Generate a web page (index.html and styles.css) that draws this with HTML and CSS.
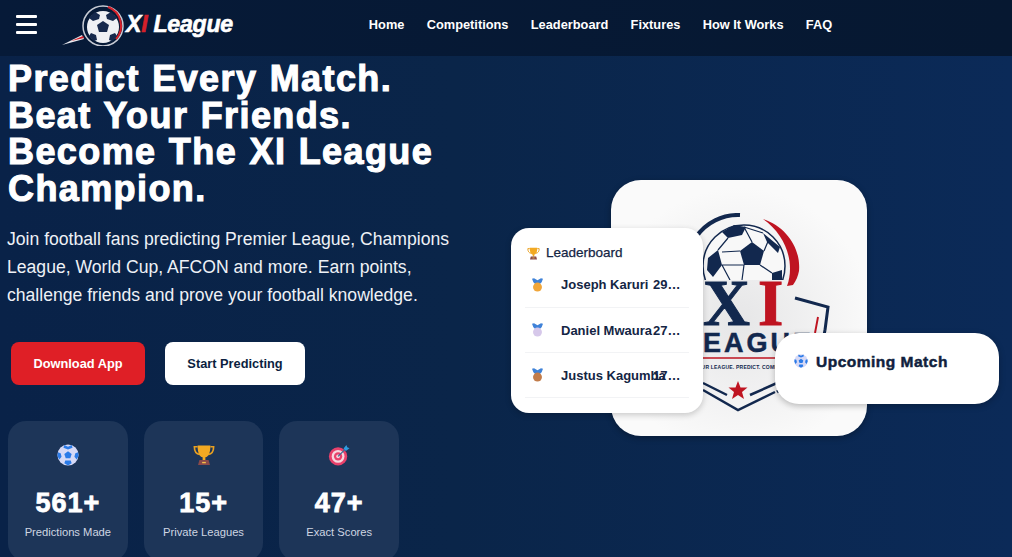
FILE: index.html
```html
<!DOCTYPE html>
<html lang="en">
<head>
    <meta charset="UTF-8">
    <meta name="viewport" content="width=device-width, initial-scale=1.0">
    <title>XI League</title>
    <link rel="stylesheet" href="styles.css">
</head>
<body>
    <svg class="icon-defs" width="0" height="0">
        <defs>
            <symbol id="ball" viewBox="0 0 24 24">
                <circle cx="12" cy="12" r="11.500" fill="#d6d9f6"/>
                <path d="M12 8l4 3-1.500 4.500h-5L8 11z" fill="#2b7be8"/>
                <path d="M8 1l4 2 4-2 1 3-5 2-5-2zM1 9l3 1 1 4-2.500 3L.5 13zM23 9l-3 1-1 4 2.500 3 2-4zM8 21l1-3h6l1 3-4 2.500z" fill="#2b7be8"/>
            </symbol>
            <symbol id="trophy" viewBox="0 0 24 24">
                <path d="M5 3H1.500c0 5 2 8 6 8.500M19 3h3.500c0 5-2 8-6 8.500" fill="none" stroke="#e9a020" stroke-width="1.800"/>
                <path d="M5 1.500h14c0 8-2 12-5.500 13v3h-3v-3C7 13.500 5 9.500 5 1.500z" fill="#f2a922"/>
                <path d="M7 17.500h10l1.500 5.500h-13z" fill="#8a4a4a"/>
                <rect x="10" y="19.500" width="4" height="1.500" fill="#f2c14a"/>
            </symbol>
            <symbol id="target" viewBox="0 0 24 24">
                <circle cx="11" cy="13.500" r="10" fill="#e8416b"/>
                <circle cx="11" cy="13.500" r="7" fill="#f7d7df"/>
                <circle cx="11" cy="13.500" r="4.500" fill="#e8416b"/>
                <circle cx="11" cy="13.500" r="2" fill="#f7d7df"/>
                <path d="M11 13.500l9-9" stroke="#3b6e96" stroke-width="1.500"/>
                <path d="M17 5l3-4 1 2.500 2.500 1-4 3z" fill="#2f9be0"/>
            </symbol>
            <symbol id="medal" viewBox="0 0 16 20">
                <path d="M0 1l3-1 5 3 5-3 3 1-2 5-3 3H5L2 6z" fill="#3f82d8"/>
                <circle cx="8" cy="13" r="6.500"/>
            </symbol>
        </defs>
    </svg>

    <div class="page">
        <nav class="navbar">
            <button class="menu-btn" aria-label="Menu"><span></span><span></span><span></span></button>
            <a class="brand" href="#">
                <svg class="brand-ball" viewBox="0 -2 64 44" width="64" height="44">
                    <path d="M1 41l20-10 2 4z" fill="#e8e9ee"/>
                    <path d="M10 37l12-5 1 2z" fill="#d5202a"/>
                    <circle cx="42" cy="22" r="20" fill="none" stroke="#c7cbd4" stroke-width="1.500"/>
                    <path d="M47 3a20 20 0 0 1 8 32" fill="none" stroke="#d5202a" stroke-width="2"/>
                    <circle cx="42" cy="23" r="16" fill="#eef0f4"/>
                    <path d="M42 17l6 4-2 7h-8l-2-7z" fill="#16294d"/>
                    <path d="M34 8l5 3-1 4-6 2-4-3zM50 8l-5 3 1 4 6 2 4-3zM30 29l5 2 1 5-3 1-5-5zM54 29l-5 2-1 5 3 1 5-5z" fill="#16294d"/>
                </svg>
                <span class="brand-name"><b>X</b><b class="brand-red">I</b> League</span>
            </a>
            <ul class="nav-links">
                <li>Home</li>
                <li>Competitions</li>
                <li>Leaderboard</li>
                <li>Fixtures</li>
                <li>How It Works</li>
                <li>FAQ</li>
            </ul>
        </nav>

        <main class="hero">
            <section class="hero-copy">
                <h1>Predict Every Match.<br>Beat Your Friends.<br>Become The XI League<br>Champion.</h1>
                <p class="lead">Join football fans predicting Premier League, Champions League, World Cup, AFCON and more. Earn points, challenge friends and prove your football knowledge.</p>
                <div class="hero-actions">
                    <a class="btn btn-red" href="#">Download App</a>
                    <a class="btn btn-white" href="#">Start Predicting</a>
                </div>
                <div class="stats">
                    <div class="stat">
                        <svg class="stat-icon"><use href="#ball"/></svg>
                        <strong>561+</strong>
                        <span>Predictions Made</span>
                    </div>
                    <div class="stat">
                        <svg class="stat-icon"><use href="#trophy"/></svg>
                        <strong>15+</strong>
                        <span>Private Leagues</span>
                    </div>
                    <div class="stat">
                        <svg class="stat-icon"><use href="#target"/></svg>
                        <strong>47+</strong>
                        <span>Exact Scores</span>
                    </div>
                </div>
            </section>

            <section class="hero-visual">
                <div class="logo-card">
                    <div class="crest">
                        <svg class="crest-art" viewBox="0 0 160 210" width="160" height="210">
                            <defs>
                                <clipPath id="ball-clip"><rect x="0" y="0" width="160" height="67"/></clipPath>
                            </defs>
                            <path d="M26 24A51 51 0 0 1 70 2" fill="none" stroke="#12284e" stroke-width="4"/>
                            <path d="M93 6c24 8 38 30 36 52-1 5-3 10-6 14l-6 1c8-22 0-50-24-67z" fill="#bf1421"/>
                            <g clip-path="url(#ball-clip)">
                                <circle cx="74" cy="53" r="41" fill="#f8f8f8" stroke="#12284e" stroke-width="1.500"/>
                                <path d="M82 29l12 9-4 14H74l-4-14z" fill="#12284e"/>
                                <path d="M52 19l12-7 12 2-4 8-14 3zM93 20l17 14-2 6-11-11zM48 37l4 15-9 12-6-7 1-12zM102 60l10-3v10h-10z" fill="#12284e"/>
                                <path d="M82 29l-8-15M94 38l5-12M90 52l12 8M74 52l-2 15M70 38l-18 1M58 25l-10 12M52 52l22 0M52 52l8 15M74 14l19 6" stroke="#12284e" stroke-width="1.200" fill="none"/>
                            </g>
                            <path d="M125 85l33 9-3 23" fill="none" stroke="#12284e" stroke-width="3"/>
                            <path d="M148 104l-3 16" fill="none" stroke="#bf1421" stroke-width="2"/>
                            <path d="M155 117c-3 20-10 34-24 44l-24 18" fill="none" stroke="#12284e" stroke-width="3"/>
                            <path d="M33 145h92" stroke="#bf1421" stroke-width="1.500"/>
                            <path d="M33 170l24 12M107 170l-27 12" stroke="#12284e" stroke-width="2.500"/>
                            <path d="M33 177l35 20 37-18" fill="none" stroke="#12284e" stroke-width="2.500"/>
                            <path d="M68 168l2.500 6.500h7l-5.500 4.500 2 7-6-4-6 4 2-7-5.500-4.500h7z" fill="#bf1421"/>
                        </svg>
                        <div class="crest-xi"><span>X</span><span class="crest-red">I</span></div>
                        <div class="crest-league">LEAGUE</div>
                        <div class="crest-tag">YOUR LEAGUE. PREDICT. COMPETE.</div>
                    </div>
                </div>

                <div class="board-card">
                    <h3><svg class="board-icon"><use href="#trophy"/></svg>Leaderboard</h3>
                    <div class="board-row">
                        <svg class="medal medal-gold"><use href="#medal"/></svg>
                        <span class="player">Joseph Karuri</span>
                        <span class="points">2950</span>
                    </div>
                    <div class="board-row">
                        <svg class="medal medal-silver"><use href="#medal"/></svg>
                        <span class="player">Daniel Mwaura</span>
                        <span class="points">2700</span>
                    </div>
                    <div class="board-row">
                        <svg class="medal medal-bronze"><use href="#medal"/></svg>
                        <span class="player">Justus Kagumba</span>
                        <span class="points">1750</span>
                    </div>
                </div>

                <div class="match-card">
                    <svg class="match-icon"><use href="#ball"/></svg>
                    <span>Upcoming Match</span>
                </div>
            </section>
        </main>
    </div>
</body>
</html>
```

FILE: styles.css
```css
* {
    box-sizing: border-box;
}
body {
    margin: 0;
    font-family: 'Liberation Sans', Arial, sans-serif;
    background: #0a2550;
    color: #fff;
}
.icon-defs {
    display: block;
    height: 0;
}
.page {
    height: 100vh;
    overflow: hidden;
    background: linear-gradient(90deg, #092248 0%, #0a2549 45%, #0b2a58 100%);
}

/* top bar */
.navbar {
    display: flex;
    align-items: center;
    height: 56px;
    background: linear-gradient(90deg, #061a38, #061831);
    padding: 0 0 8px 16px;
}
.menu-btn {
    display: flex;
    flex-direction: column;
    gap: 5px;
    width: 21px;
    padding: 0;
    background: none;
    border: 0;
}
.menu-btn span {
    display: block;
    height: 3px;
    background: #fff;
    border-radius: 1px;
}
.brand {
    display: flex;
    align-items: center;
    margin-left: 24px;
    color: #fff;
    text-decoration: none;
}
.brand-name {
    margin-left: 1px;
    font-size: 23.200px;
    font-weight: 700;
    font-style: italic;
    letter-spacing: -0.3px;
    -webkit-text-stroke: 0.6px #fff;
}
.brand-name b {
    font-weight: 700;
}
.brand-red {
    color: #d5202a;
    -webkit-text-stroke: 0.6px #d5202a;
}
.nav-links {
    display: flex;
    gap: 22.300px;
    list-style: none;
    margin: 0 0 0 136px;
    padding: 0;
    font-size: 12.800px;
    font-weight: 700;
}

/* hero */
.hero {
    display: flex;
    height: 501px;
}
.hero-copy {
    width: 500px;
    padding: 5px 0 0 8px;
}
.hero-copy h1 {
    margin: 0;
    font-size: 36px;
    line-height: 36.700px;
    font-weight: 700;
    letter-spacing: 1.400px;
    word-spacing: 1px;
    -webkit-text-stroke: 1.100px #fff;
}
.lead {
    width: 460px;
    margin: 17px 0 0 -1px;
    font-size: 17.600px;
    line-height: 28px;
    color: #eef1f6;
}
.hero-actions {
    display: flex;
    gap: 20px;
    margin: 33px 0 0 3px;
}
.btn {
    display: flex;
    align-items: center;
    justify-content: center;
    height: 43px;
    border-radius: 8px;
    font-size: 12.800px;
    font-weight: 700;
    text-decoration: none;
}
.btn-red {
    width: 134px;
    background: #df1f26;
    color: #fff;
}
.btn-white {
    width: 140px;
    background: #fff;
    color: #0c1f3f;
}
.stats {
    display: flex;
    gap: 16px;
    margin-top: 36px;
}
.stat {
    display: flex;
    flex-direction: column;
    align-items: center;
    width: 119.700px;
    height: 140px;
    padding-top: 23px;
    border-radius: 18px;
    background: #1d3558;
}
.stat-icon {
    width: 22px;
    height: 22px;
}
.stat strong {
    margin-top: 21px;
    font-size: 27px;
    line-height: 32px;
    letter-spacing: 1px;
    -webkit-text-stroke: 0.8px #fff;
}
.stat span {
    margin-top: 7px;
    font-size: 11.200px;
    color: #cfd6e2;
}

/* right side, cards overlap each other */
.hero-visual {
    position: relative;
    flex: 1;
}
.logo-card {
    position: absolute;
    left: 111px;
    top: 124px;
    width: 256px;
    height: 256px;
    border-radius: 30px;
    background: radial-gradient(circle at 50% 55%, #e6e6e7, #fafafa 70%);
    box-shadow: 0 2px 6px rgba(0, 0, 0, 0.3);
}
.crest {
    position: relative;
    width: 160px;
    height: 210px;
    margin: 33px 0 0 59px;
    color: #12284e;
}
.crest-art {
    display: block;
}
.crest-xi {
    position: absolute;
    left: 33px;
    top: 69px;
    font-family: 'Liberation Serif', serif;
    font-size: 65px;
    line-height: 43px;
    font-weight: 700;
    letter-spacing: 8px;
    -webkit-text-stroke: 1px #12284e;
}
.crest-red {
    color: #bf1421;
    -webkit-text-stroke: 1px #bf1421;
}
.crest-league {
    position: absolute;
    left: 13.500px;
    top: 120px;
    font-size: 27px;
    line-height: 20px;
    font-weight: 700;
    letter-spacing: 3px;
    -webkit-text-stroke: 0.5px #12284e;
}
.crest-tag {
    position: absolute;
    left: 24px;
    top: 151px;
    white-space: nowrap;
    font-size: 5px;
    line-height: 7px;
    font-weight: 700;
    letter-spacing: 0.2px;
}
.board-card {
    position: absolute;
    left: 11px;
    top: 172px;
    width: 192px;
    height: 185px;
    padding: 16px 14px 0;
    border-radius: 18px;
    background: #fff;
    box-shadow: 0 2px 6px rgba(0, 0, 0, 0.2);
    color: #142544;
}
.board-card h3 {
    display: flex;
    align-items: center;
    gap: 6px;
    margin: 0 0 0 2px;
    font-size: 13.500px;
    line-height: 18px;
    font-weight: 400;
    -webkit-text-stroke: 0.25px #142544;
}
.board-icon {
    width: 13px;
    height: 13px;
}
.board-row {
    display: flex;
    align-items: center;
    height: 45px;
    padding: 0 8px 0 7px;
    border-bottom: 1px solid #f2f3f5;
    font-size: 13px;
    font-weight: 700;
}
.board-row:first-of-type {
    height: 46px;
}
.medal {
    flex: none;
    width: 11px;
    height: 14px;
    margin-right: 18px;
}
.medal-gold {
    fill: #f0a63a;
}
.medal-silver {
    fill: #d6c8ea;
}
.medal-bronze {
    fill: #c27c4a;
}
.player {
    flex: none;
    width: 92px;
    white-space: nowrap;
}
.points {
    width: 28px;
    flex: none;
    overflow: hidden;
    white-space: nowrap;
    text-overflow: ellipsis;
}
.match-card {
    display: flex;
    align-items: flex-start;
    position: absolute;
    left: 275px;
    top: 277px;
    width: 224px;
    height: 71px;
    padding: 20px 19px;
    border-radius: 24px;
    background: #fff;
    box-shadow: 0 2px 6px rgba(0, 0, 0, 0.25);
    color: #111f3e;
    font-size: 15.500px;
    font-weight: 700;
    letter-spacing: 0.5px;
    -webkit-text-stroke: 0.5px #111f3e;
}
.match-icon {
    width: 14px;
    height: 14px;
    margin: 1px 8px 0 0;
}
```
